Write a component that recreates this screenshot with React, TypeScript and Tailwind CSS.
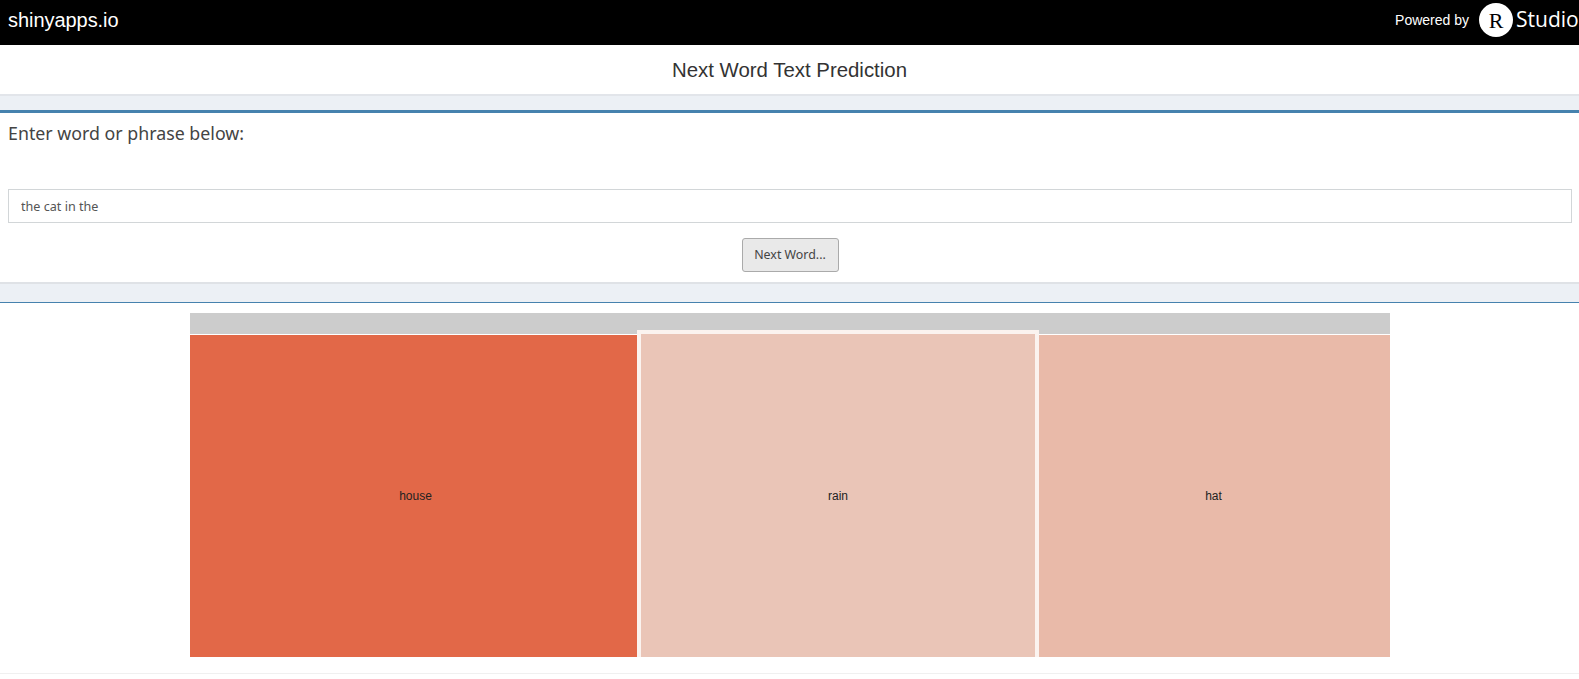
export default function App() {
  return (
    <div className="h-[679px] overflow-hidden bg-white font-['Noto_Sans',sans-serif] text-[#333]">
      <header className="flex h-[45px] items-center justify-between bg-black pb-[5px] pl-2 text-white">
        <span className="font-['Liberation_Sans',sans-serif] text-[20px] tracking-[-0.05px]">shinyapps.io</span>
        <div className="flex items-center">
          <span className="mr-[10px] font-['Liberation_Sans',sans-serif] text-[14px]">Powered by</span>
          <span className="flex h-[34px] w-[34px] items-center justify-center rounded-full bg-white font-['Liberation_Serif',serif] text-[22px] text-black">
            R
          </span>
          <span className="ml-[3px] w-[63px] overflow-hidden font-['Open_Sans',sans-serif] text-[21px] whitespace-nowrap">Studio</span>
        </div>
      </header>

      <div className="flex h-[51px] items-center justify-center border-b-2 border-[#e2e5ea] pt-[1px] font-['Liberation_Sans',sans-serif] text-[20.4px]">
        Next Word Text Prediction
      </div>

      <div className="h-[14px] bg-[#ecf0f5]" />

      <section className="h-[174px] border-t-[3px] border-b-2 border-t-[#4682ae] border-b-[#dfe2e6] pr-[7px] pl-2">
        <h2 className="pt-[7px] text-[17.8px] leading-[26px] text-[#444]">Enter word or phrase below:</h2>
        <input
          readOnly
          value="the cat in the"
          className="mt-[43px] block h-[34px] w-full border border-[#d2d6d8] px-3 text-[12.6px] text-[#555] outline-none"
        />
        <div className="mt-[15px] flex justify-center">
          <button
            type="button"
            className="h-[34px] w-[97px] rounded-[3px] border border-[#aaa] bg-[#e9e9e9] text-[12.4px] text-[#444]"
          >
            Next Word...
          </button>
        </div>
      </section>

      <div className="h-[19px] border-b border-[#4682ae] bg-[#ecf0f5]" />

      <div className="mx-[190px] mt-[10px] w-[1200px]">
        <div className="h-[21px] bg-[#cccccc]" />
        <div className="flex h-[323px] font-['Liberation_Sans',sans-serif] text-[12px] text-[#222]">
          <div className="flex w-[447px] items-center justify-center border-t border-white bg-[#e26848] pl-[4px]">house</div>
          <div className="relative z-10 mt-[-4px] flex w-[402px] items-center justify-center border-[4px] border-b-0 border-[#fbf3ef] bg-[#eac5b7] pt-[1px]">rain</div>
          <div className="flex flex-1 items-center justify-center border-t border-white bg-[#e9baa9] pr-[2px]">hat</div>
        </div>
      </div>

      <div className="mt-[16px] border-t border-[#f0f0f0]" />
    </div>
  );
}
